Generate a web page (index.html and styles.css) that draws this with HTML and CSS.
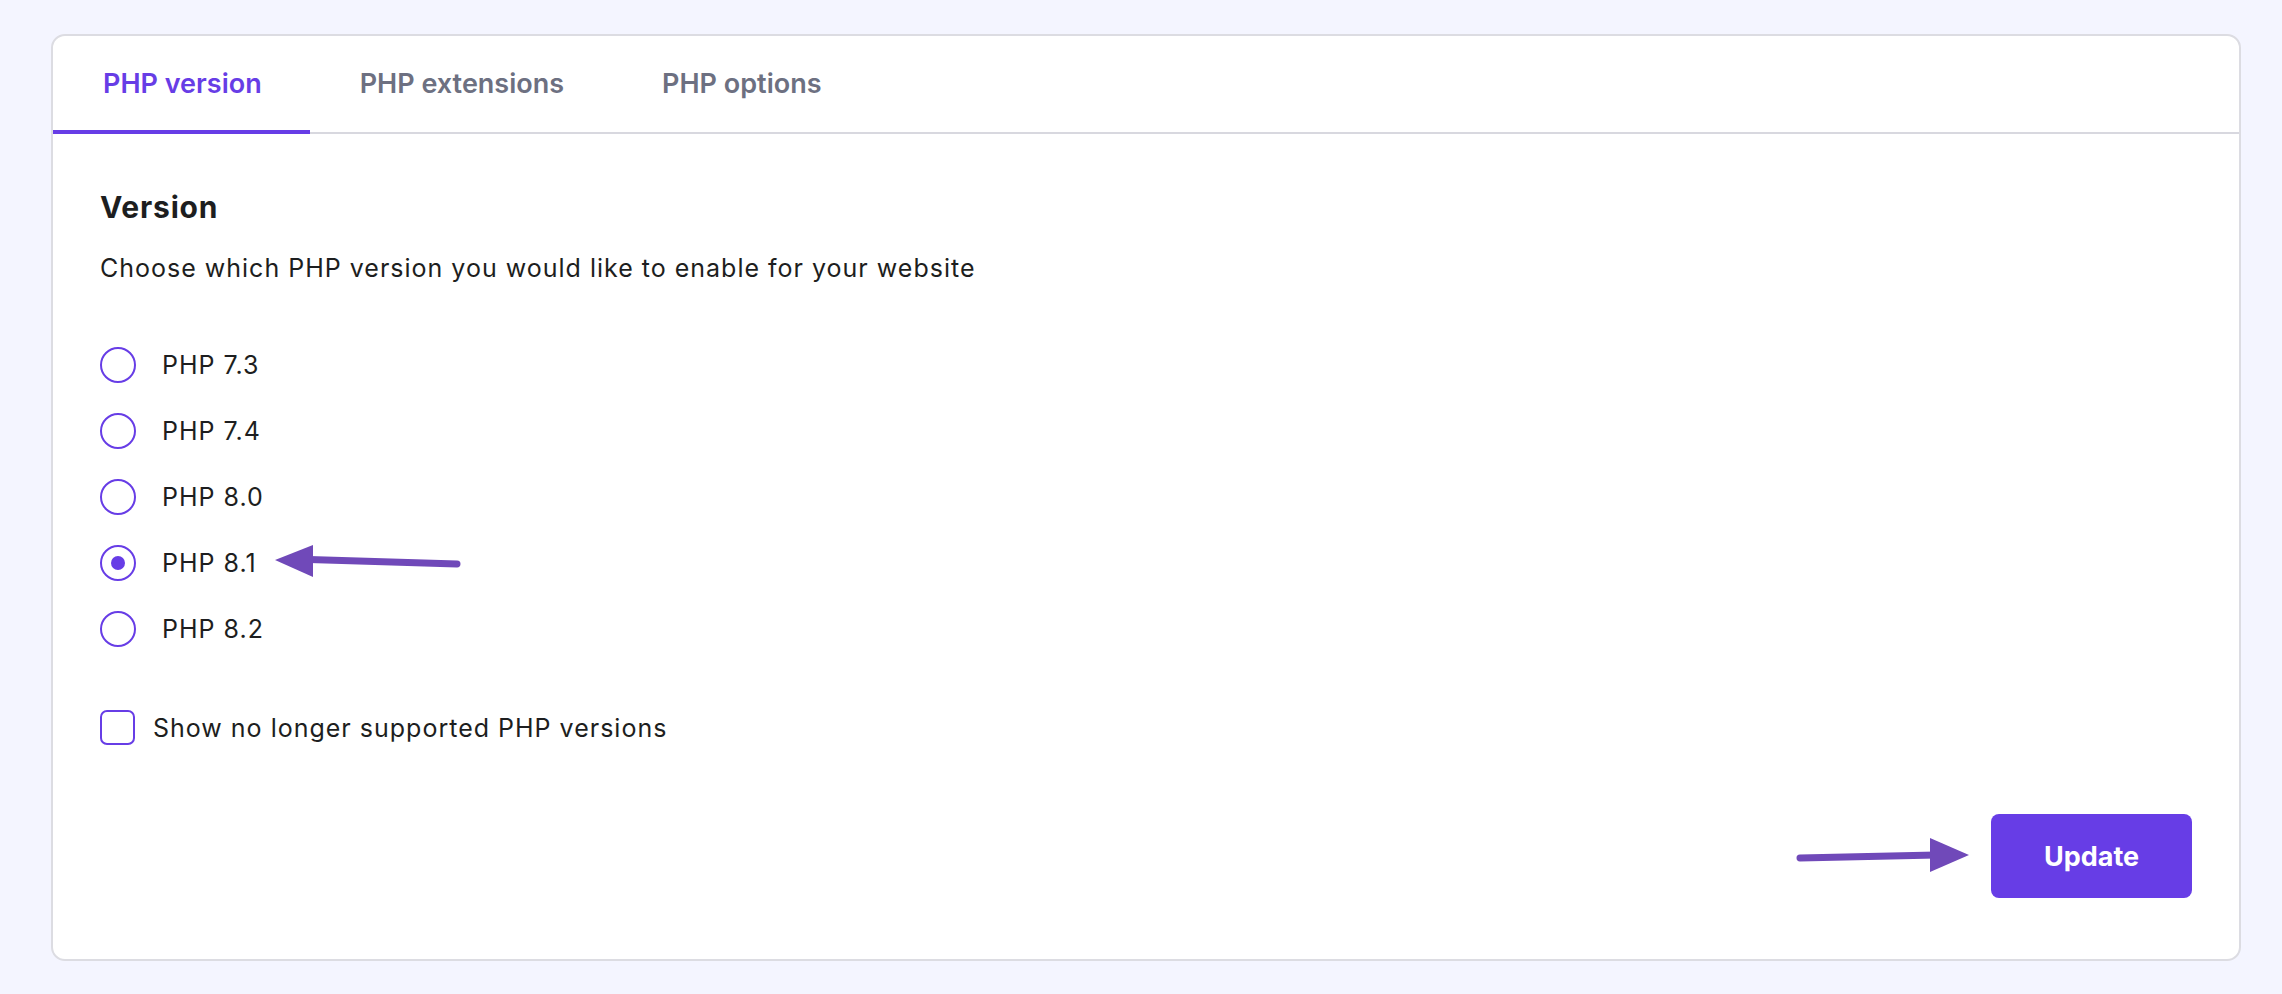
FILE: index.html
```html
<!DOCTYPE html>
<html lang="en">
<head>
<meta charset="utf-8">
<title>PHP configuration</title>
<link rel="stylesheet" href="styles.css">
</head>
<body>
<div class="card">
  <nav class="tabs">
    <div class="tab active">PHP version</div>
    <div class="tab">PHP extensions</div>
    <div class="tab">PHP options</div>
  </nav>
  <section class="content">
    <h2 class="title">Version</h2>
    <p class="desc">Choose which PHP version you would like to enable for your website</p>
    <div class="radios">
      <label class="radio"><span class="dot"></span><span class="label">PHP 7.3</span></label>
      <label class="radio"><span class="dot"></span><span class="label">PHP 7.4</span></label>
      <label class="radio"><span class="dot"></span><span class="label">PHP 8.0</span></label>
      <label class="radio checked"><span class="dot"></span><span class="label">PHP 8.1</span></label>
      <label class="radio"><span class="dot"></span><span class="label">PHP 8.2</span></label>
    </div>
    <label class="check"><span class="box"></span><span class="label">Show no longer supported PHP versions</span></label>
    <div class="actions">
      <button class="btn">Update</button>
    </div>
  </section>
  <svg class="annot" width="2190" height="927" viewBox="0 0 2190 927" aria-hidden="true">
    <line x1="406" y1="530" x2="258" y2="525.5" stroke="#7049b9" stroke-width="7" stroke-linecap="round"/>
    <polygon points="224,526 262,511 262,543" fill="#7049b9"/>
    <line x1="1749" y1="824" x2="1885" y2="821" stroke="#7049b9" stroke-width="7" stroke-linecap="round"/>
    <polygon points="1918,821 1879,804 1879,838" fill="#7049b9"/>
  </svg>
</div>
</body>
</html>
```
FILE: styles.css
```css
* { box-sizing: border-box; }
html, body { margin: 0; }
body {
  background: #f4f5ff;
  padding: 34px 41px 33px 51px;
  font-family: Inter, "Noto Sans", "Liberation Sans", sans-serif;
  color: #1d1e20;
}
.card {
  position: relative;
  width: 2190px;
  height: 927px;
  background: #fff;
  border: 2px solid #dcdce2;
  border-radius: 14px;
  display: flex;
  flex-direction: column;
}
.tabs {
  display: flex;
  height: 98px;
  border-bottom: 2px solid #d8d8df;
}
.tab {
  padding: 0 48px 0 50px;
  display: flex;
  align-items: center;
  font-size: 27px;
  font-weight: 600;
  color: #6d7081;
  margin-bottom: -2px;
  border-bottom: 4px solid transparent;
}
.tab.active {
  color: #673de6;
  border-bottom-color: #673de6;
}
.content {
  flex: 1;
  display: flex;
  flex-direction: column;
  padding: 55px 47px 61px 47px;
}
.title {
  margin: 0;
  font-size: 30px;
  line-height: 36px;
  font-weight: 700;
  letter-spacing: 0.8px;
  color: #1d1e20;
}
.desc {
  margin: 27px 0 0;
  font-size: 25px;
  line-height: 32px;
  letter-spacing: 1px;
}
.radios {
  display: flex;
  flex-direction: column;
  gap: 30px;
  margin-top: 63px;
}
.radio {
  display: flex;
  align-items: center;
  gap: 26px;
  height: 36px;
}
.dot {
  width: 36px;
  height: 36px;
  border: 2px solid #673de6;
  border-radius: 50%;
  display: flex;
  align-items: center;
  justify-content: center;
  flex: none;
}
.radio.checked .dot::after {
  content: "";
  width: 14px;
  height: 14px;
  border-radius: 50%;
  background: #673de6;
}
.label {
  font-size: 25px;
  line-height: 32px;
  letter-spacing: 1px;
}
.check {
  display: flex;
  align-items: center;
  gap: 18px;
  margin-top: 63px;
  height: 35px;
}
.box {
  width: 35px;
  height: 35px;
  border: 2px solid #673de6;
  border-radius: 7px;
  flex: none;
}
.actions {
  margin-top: auto;
  display: flex;
  justify-content: flex-end;
}
.btn {
  width: 201px;
  height: 84px;
  border: 0;
  border-radius: 8px;
  background: #673de6;
  color: #fff;
  font-family: inherit;
  font-size: 27px;
  font-weight: 700;
}
.annot {
  position: absolute;
  left: -2px;
  top: -2px;
  pointer-events: none;
}
```
